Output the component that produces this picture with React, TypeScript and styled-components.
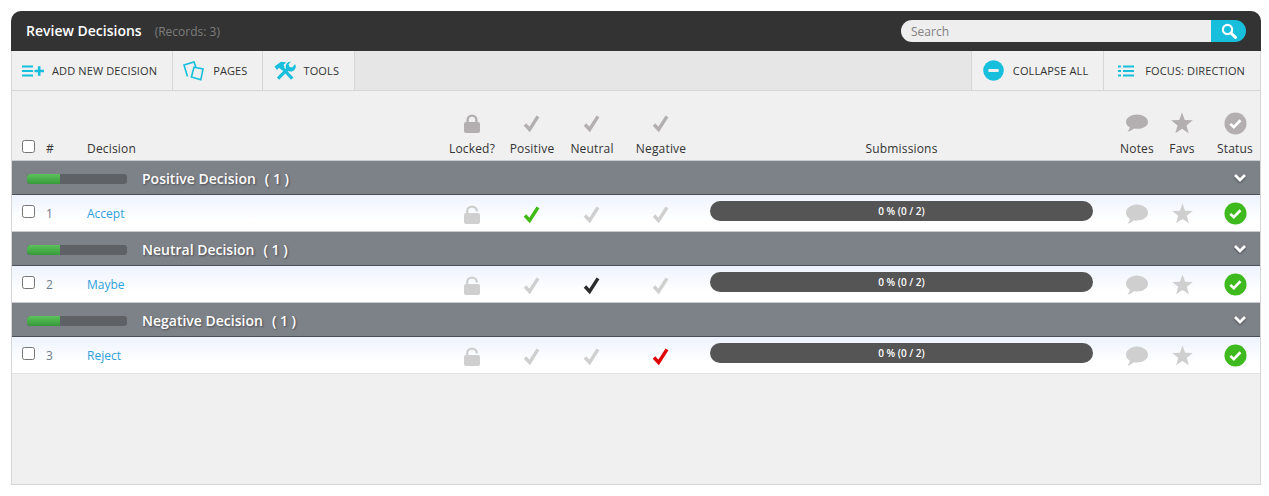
import React from "react";
import styled, { createGlobalStyle } from "styled-components";

const Global = createGlobalStyle`
  html, body { margin: 0; padding: 0; background: #fff; }
  body { font-family: "Open Sans", "Noto Sans", sans-serif; }
`;

const COLS = "34px 41px 355px 60px 60px 60px 78px 420px 34px 56px 50px";

const Page = styled.div`
  width: 1250px;
  height: 474px;
  margin: 11px 0 0 11px;
  display: flex;
  flex-direction: column;
  background: #f0f0f0;
  border-radius: 10px 10px 0 0;
  box-sizing: border-box;
  border-bottom: 1px solid #d6d6d6;
`;

const Header = styled.header`
  height: 40px;
  flex: none;
  background: #333;
  border-radius: 10px 10px 0 0;
  display: flex;
  align-items: center;
  padding: 0 15px 0 15px;
`;

const Title = styled.h1`
  margin: -1px 0 0;
  font-size: 14px;
  font-weight: 600;
  color: #fff;
`;

const Records = styled.span`
  margin-left: 13px;
  font-size: 12px;
  color: #7d7d7d;
`;

const SearchBox = styled.div`
  margin-left: auto;
  display: flex;
  width: 345px;
  height: 22px;
  border-radius: 11px;
  overflow: hidden;
  margin-top: -1px;
`;

const SearchField = styled.div`
  flex: 1;
  background: #eee;
  color: #808080;
  font-size: 12px;
  line-height: 23px;
  padding-left: 10px;
`;

const SearchBtn = styled.div`
  width: 35px;
  background: #17bfdc;
  display: flex;
  align-items: center;
  justify-content: center;
`;

const Body = styled.div`
  flex: 1;
  display: flex;
  flex-direction: column;
  border-left: 1px solid #d6d6d6;
  border-right: 1px solid #d6d6d6;
`;

const Toolbar = styled.nav`
  height: 40px;
  flex: none;
  display: flex;
  background: #e6e6e6;
  border-bottom: 1px solid #d6d6d6;
  box-sizing: border-box;
`;

const ToolButton = styled.div<{ $left?: boolean; $pad: number; $lead: number }>`
  display: flex;
  align-items: center;
  gap: ${(p) => p.$pad}px;
  padding: 0 15px 0 ${(p) => p.$lead}px;
  background: #f0f0f0;
  font-size: 11px;
  font-weight: 500;
  letter-spacing: 0.12px;
  color: #333;
  ${(p) => (p.$left ? "border-left: 1px solid #d6d6d6;" : "border-right: 1px solid #d6d6d6;")}
`;

const Spacer = styled.div`
  flex: 1;
`;

const ColHead = styled.div`
  height: 69px;
  flex: none;
  display: grid;
  grid-template-columns: ${COLS};
  box-sizing: border-box;
`;

const HeadCell = styled.div<{ $left?: boolean }>`
  display: flex;
  flex-direction: column;
  justify-content: flex-end;
  align-items: ${(p) => (p.$left ? "flex-start" : "center")};
  padding-bottom: 3px;
  font-size: 12px;
  letter-spacing: 0.17px;
  line-height: 16px;
  color: #333;
  white-space: nowrap;
`;

const HeadSub = styled(HeadCell)`
  padding-right: 17px;
`;

const HeadIcon = styled.div<{ $mb: number }>`
  display: flex;
  margin-bottom: ${(p) => p.$mb}px;
`;

const Check = styled.span`
  width: 13px;
  height: 13px;
  box-sizing: border-box;
  border: 1px solid #767676;
  border-radius: 2.5px;
  background: #fff;
  display: block;
`;

const HeadCheck = styled.div`
  display: flex;
  align-items: flex-end;
  padding: 0 0 7px 10px;
`;

const GroupBar = styled.div`
  height: 35px;
  flex: none;
  box-sizing: border-box;
  background: #7d8188;
  border-top: 1px solid #c9cbce;
  border-bottom: 1px solid #4c4f55;
  display: flex;
  align-items: center;
  padding: 1px 13px 0 15px;
  color: #fff;
  font-size: 14px;
  font-weight: 600;
  text-shadow: 1px 1px 2px rgba(0, 0, 0, 0.4);
`;

const Progress = styled.div`
  width: 100px;
  height: 10px;
  border-radius: 3px;
  background: #5e6166;
  overflow: hidden;
  margin: 2px 15px 0 0;
`;

const ProgressFill = styled.div`
  height: 100%;
  background: linear-gradient(#5bc25b, #379a3a);
  border-radius: 3px 0 0 3px;
`;

const GroupCount = styled.span`
  margin-left: 9px;
  white-space: pre;
`;

const Chevron = styled.svg`
  margin-left: auto;
  filter: drop-shadow(0 1px 1px rgba(0, 0, 0, 0.4));
`;

const Row = styled.div`
  height: 36px;
  flex: none;
  box-sizing: border-box;
  display: grid;
  grid-template-columns: ${COLS};
  align-items: center;
  background: linear-gradient(#edf3ff, #fff 70%);
  font-size: 12px;

  &:last-child {
    height: 37px;
    border-bottom: 1px solid #e2e2e2;
  }
`;

const RowCheck = styled.div`
  padding: 0 0 3px 10px;
`;

const RowNum = styled.div`
  color: #6f7c8c;
`;

const RowLink = styled.a`
  color: #2fa0dc;
`;

const IconCell = styled.div<{ $top?: number }>`
  display: flex;
  justify-content: center;
  padding-top: ${(p) => p.$top ?? 2}px;
`;

const SubCell = styled.div`
  padding: 0 27px 5px 10px;
`;

const SubBar = styled.div`
  height: 20px;
  border-radius: 10px;
  background: #555;
  color: #fff;
  font-size: 10px;
  font-weight: 600;
  line-height: 21px;
  text-align: center;
`;

const CheckIcon = ({ c }: { c: string }) => (
  <svg width="18" height="20" viewBox="0 0 18 20">
    <path d="M2 11.5 L6.6 16.4 L15 3.4" fill="none" stroke={c} strokeWidth="3.4" />
  </svg>
);

const LockIcon = ({ open, c }: { open?: boolean; c: string }) => (
  <svg width="18" height="20" viewBox="0 0 18 20">
    <rect x="1" y="9" width="16" height="11" rx="2" fill={c} />
    {open ? (
      <path d="M4.2 10 V7 a4.8 4.4 0 0 1 9.6 0 V7.5" fill="none" stroke={c} strokeWidth="2.4" />
    ) : (
      <path d="M4.6 10 V7 a4.4 4.4 0 0 1 8.8 0 V10" fill="none" stroke={c} strokeWidth="2.4" />
    )}
  </svg>
);

const NoteIcon = ({ c, h }: { c: string; h: number }) => (
  <svg width="24" height={h} viewBox="0 1 24 18.2" preserveAspectRatio="none">
    <path d="M12 1.5 C18 1.5 23 4.8 23 9 C23 13.2 18 16 12 16 C10.8 16 9.8 15.9 8.8 15.7 C7 17.4 4.8 18.6 2.4 18.8 C3.8 17.5 4.6 15.9 4.8 14.4 C2.4 13 1 11.1 1 9 C1 4.8 6 1.5 12 1.5 Z" fill={c} />
  </svg>
);

const StarIcon = ({ c, s }: { c: string; s: number }) => (
  <svg width={s} height={s} viewBox="0 0 24 24">
    <path d="M12 0.5 L15 8.8 L23.8 9.1 L16.9 14.6 L19.3 23.2 L12 18.2 L4.7 23.2 L7.1 14.6 L0.2 9.1 L9 8.8 Z" fill={c} />
  </svg>
);

const StatusIcon = ({ c }: { c: string }) => (
  <svg width="23" height="23" viewBox="0 0 24 24">
    <circle cx="12" cy="12" r="11.5" fill={c} />
    <path d="M6.6 12.4 L10.2 15.8 L17.2 8.6" fill="none" stroke="#fff" strokeWidth="2.8" />
  </svg>
);

const groups = [
  { title: "Positive Decision", n: 1, link: "Accept", mark: 0, color: "#3fba12" },
  { title: "Neutral Decision", n: 2, link: "Maybe", mark: 1, color: "#2b2b2b" },
  { title: "Negative Decision", n: 3, link: "Reject", mark: 2, color: "#e00000" },
];

export default function App() {
  return (
    <>
      <Global />
      <Page>
        <Header>
          <Title>Review Decisions</Title>
          <Records>(Records: 3)</Records>
          <SearchBox>
            <SearchField>Search</SearchField>
            <SearchBtn>
              <svg width="16" height="16" viewBox="0 0 16 16">
                <circle cx="6.5" cy="6.5" r="4.6" fill="none" stroke="#fff" strokeWidth="2.2" />
                <path d="M10 10 L14.4 14.4" stroke="#fff" strokeWidth="3" strokeLinecap="round" />
              </svg>
            </SearchBtn>
          </SearchBox>
        </Header>
        <Body>
          <Toolbar>
            <ToolButton $pad={8} $lead={10}>
              <svg width="22" height="14" viewBox="0 0 22 14">
                <path d="M0 2.5 H11 M0 7 H11 M0 11.5 H11" stroke="#17bfdc" strokeWidth="2" />
                <path d="M12.5 7 H22 M17.2 2.2 V11.8" stroke="#17bfdc" strokeWidth="2.6" />
              </svg>
              ADD NEW DECISION
            </ToolButton>
            <ToolButton $pad={9} $lead={10}>
              <svg width="21" height="20" viewBox="0 0 21 20">
                <path d="M4.5 15.5 L1 4 L11 0.9 L13 6.4" fill="none" stroke="#17bfdc" strokeWidth="1.6" />
                <path d="M11 6.2 L20 8 L17.8 18.8 L8.4 16 Z" fill="none" stroke="#17bfdc" strokeWidth="1.6" />
              </svg>
              PAGES
            </ToolButton>
            <ToolButton $pad={7} $lead={11}>
              <svg width="22" height="20" viewBox="0 0 22 20">
                <path d="M0.5 5.5 L7 0.8 L12.5 1.5 L9.5 3.8 L10.5 6 L7.5 9 L5 6.8 L3 9 Z" fill="#17bfdc" />
                <path d="M8 6.5 L18.2 17.6" stroke="#17bfdc" strokeWidth="3.2" />
                <path d="M21 3 A5 5 0 1 1 16.8 0.6 L14.6 3.4 L15.6 6 L18.4 6.4 Z" fill="#17bfdc" />
                <path d="M4 17.6 L14 7.5" stroke="#17bfdc" strokeWidth="3.2" />
              </svg>
              TOOLS
            </ToolButton>
            <Spacer />
            <ToolButton $left $pad={9} $lead={11}>
              <svg width="21" height="21" viewBox="0 0 22 22">
                <circle cx="11" cy="11" r="10.8" fill="#17bfdc" />
                <rect x="5.5" y="9.4" width="11" height="3.2" rx="1" fill="#f0f0f0" />
              </svg>
              COLLAPSE ALL
            </ToolButton>
            <ToolButton $left $pad={11} $lead={14}>
              <svg width="16" height="12" viewBox="0 0 16 12">
                <path d="M0 1.5 H3 M5 1.5 H16 M0 6 H3 M5 6 H16 M0 10.5 H3 M5 10.5 H16" stroke="#17bfdc" strokeWidth="2.2" />
              </svg>
              FOCUS: DIRECTION
            </ToolButton>
          </Toolbar>
          <ColHead>
            <HeadCheck><Check /></HeadCheck>
            <HeadCell $left>#</HeadCell>
            <HeadCell $left>Decision</HeadCell>
            <HeadCell><HeadIcon $mb={8}><LockIcon c="#b3afb0" /></HeadIcon>Locked?</HeadCell>
            <HeadCell><HeadIcon $mb={8}><CheckIcon c="#b3afb0" /></HeadIcon>Positive</HeadCell>
            <HeadCell><HeadIcon $mb={8}><CheckIcon c="#b3afb0" /></HeadIcon>Neutral</HeadCell>
            <HeadCell><HeadIcon $mb={8}><CheckIcon c="#b3afb0" /></HeadIcon>Negative</HeadCell>
            <HeadSub>Submissions</HeadSub>
            <HeadCell><HeadIcon $mb={9}><NoteIcon c="#b3afb0" h={18} /></HeadIcon>Notes</HeadCell>
            <HeadCell><HeadIcon $mb={7}><StarIcon c="#b3afb0" s={22} /></HeadIcon>Favs</HeadCell>
            <HeadCell><HeadIcon $mb={6}><StatusIcon c="#b3afb0" /></HeadIcon>Status</HeadCell>
          </ColHead>
          {groups.map((g) => (
            <React.Fragment key={g.n}>
              <GroupBar>
                <Progress>
                  <ProgressFill style={{ width: "33%" }} />
                </Progress>
                {g.title}
                <GroupCount>( 1 )</GroupCount>
                <Chevron width="14" height="10" viewBox="0 0 14 10">
                  <path d="M2 2 L7 7 L12 2" fill="none" stroke="#fff" strokeWidth="2.8" />
                </Chevron>
              </GroupBar>
              <Row>
                <RowCheck><Check /></RowCheck>
                <RowNum>{g.n}</RowNum>
                <div><RowLink>{g.link}</RowLink></div>
                <IconCell><LockIcon open c="#cfcfcf" /></IconCell>
                {[0, 1, 2].map((i) => (
                  <IconCell key={i}>
                    <CheckIcon c={i === g.mark ? g.color : "#cfcfcf"} />
                  </IconCell>
                ))}
                <SubCell><SubBar>0 % (0 / 2)</SubBar></SubCell>
                <IconCell><NoteIcon c="#cfcfcf" h={20} /></IconCell>
                <IconCell $top={1}><StarIcon c="#cfcfcf" s={21} /></IconCell>
                <IconCell $top={1}><StatusIcon c="#3fba1e" /></IconCell>
              </Row>
            </React.Fragment>
          ))}
        </Body>
      </Page>
    </>
  );
}
